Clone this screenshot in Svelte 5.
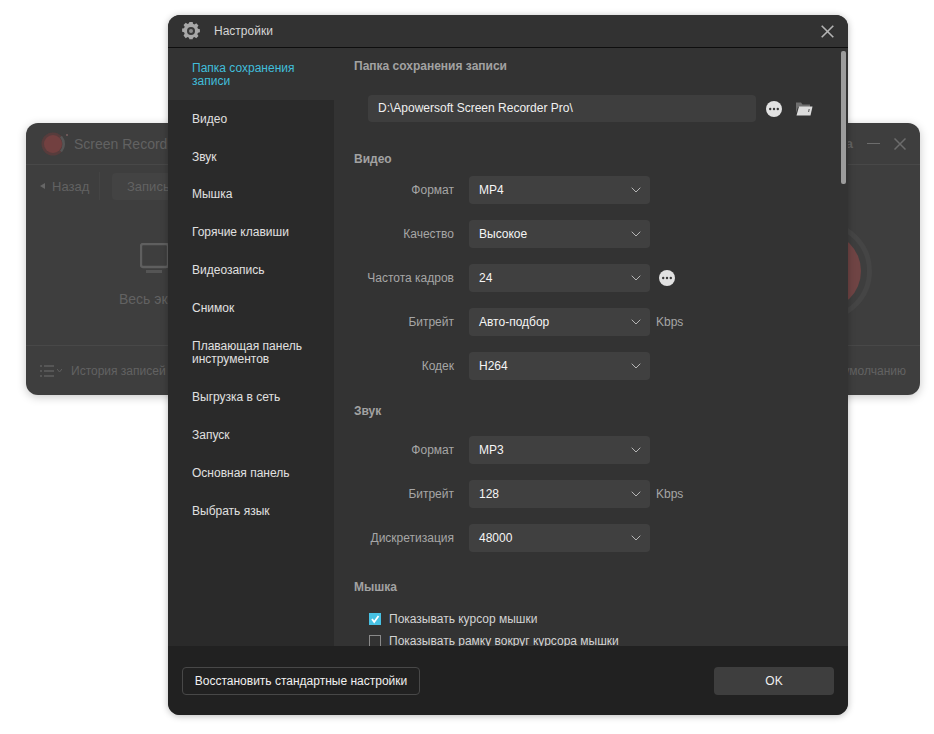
<script>
  const menu = [
    'Папка сохранения записи', 'Видео', 'Звук', 'Мышка', 'Горячие клавиши', 'Видеозапись',
    'Снимок', 'Плавающая панель инструментов', 'Выгрузка в сеть', 'Запуск', 'Основная панель', 'Выбрать язык'
  ];
  const video = [
    { label: 'Формат', value: 'MP4' },
    { label: 'Качество', value: 'Высокое' },
    { label: 'Частота кадров', value: '24', more: true },
    { label: 'Битрейт', value: 'Авто-подбор', unit: 'Kbps' },
    { label: 'Кодек', value: 'H264' }
  ];
  const audio = [
    { label: 'Формат', value: 'MP3' },
    { label: 'Битрейт', value: '128', unit: 'Kbps' },
    { label: 'Дискретизация', value: '48000' }
  ];
</script>

{#snippet dots()}
  <svg class="dots" width="18" height="18" viewBox="0 0 18 18">
    <circle cx="9" cy="9" r="8" fill="#e2e2e2" />
    <circle cx="5.2" cy="9" r="1.2" fill="#3a3a3a" />
    <circle cx="9" cy="9" r="1.2" fill="#3a3a3a" />
    <circle cx="12.8" cy="9" r="1.2" fill="#3a3a3a" />
  </svg>
{/snippet}

{#snippet row(r)}
  <div class="row">
    <span class="label">{r.label}</span>
    <div class="select">
      <span>{r.value}</span>
      <svg width="10" height="6" viewBox="0 0 10 6"><path d="M.7.7 5 5 9.3.7" fill="none" stroke="#b5b5b5" stroke-width="1" /></svg>
    </div>
    {#if r.more}{@render dots()}{/if}
    {#if r.unit}<span class="unit">{r.unit}</span>{/if}
  </div>
{/snippet}

<div class="stage">
  <section class="back">
    <header class="back-head">
      <div class="brand">
        <svg width="30" height="30" viewBox="0 0 30 30">
          <circle cx="13" cy="15" r="11.5" fill="#573c3c" />
          <circle cx="13" cy="15" r="9" fill="#724040" />
          <path d="M21 7.5a11.5 11.5 0 0 1 0 15" fill="none" stroke="#565656" stroke-width="2.5" />
          <circle cx="27" cy="6" r="1" fill="#7a6060" />
        </svg>
        <span>Screen Record</span>
      </div>
      <div class="win">
        <b>а</b>
        <i class="min"></i>
        <svg width="12" height="12" viewBox="0 0 12 12"><path d="M.5.5l11 11M11.5.5l-11 11" stroke="#6c6c6c" stroke-width="1.5" /></svg>
      </div>
    </header>
    <nav class="back-nav">
      <span class="tri"></span><span class="back-link">Назад</span>
      <i class="vline"></i>
      <span class="tab">Запись</span>
    </nav>
    <div class="back-body">
      <div class="screen">
        <svg width="28" height="34" viewBox="0 0 28 34">
          <rect x="1" y="1" width="27" height="23" rx="2" fill="none" stroke="#5f5f5f" stroke-width="2.4" />
          <rect x="6" y="27" width="16" height="3" fill="#555" />
        </svg>
        <span>Весь экран</span>
      </div>
      <div class="rec"><div class="rec-in"></div></div>
    </div>
    <footer class="back-foot">
      <div class="hist">
        <svg width="14" height="12" viewBox="0 0 14 12"><path d="M0 1h2M4 1h10M0 6h2M4 6h10M0 11h2M4 11h10" stroke="#5f5f5f" stroke-width="1.5" /></svg>
        <svg width="5" height="3" viewBox="0 0 5 3"><path d="M0 0l2.5 3L5 0" fill="none" stroke="#5f5f5f" /></svg>
        <span>История записей</span>
      </div>
      <span>По умолчанию</span>
    </footer>
  </section>

  <section class="dialog">
    <header class="head">
      <div class="title">
        <svg width="18" height="18" viewBox="0 0 18 18">
          <path fill="#a8a8a8" d="M7.2.3h3.6l.5 2.3 1.6.7 2-1.3 2.5 2.5-1.3 2 .7 1.6 2.2.5v3.6l-2.2.5-.7 1.6 1.3 2-2.5 2.5-2-1.3-1.6.7-.5 1.8H7.2l-.5-1.8-1.6-.7-2 1.3L.6 15.7l1.3-2-.7-1.6L-1 11.6V8l2.2-.5.7-1.6-1.3-2L3.1 1.4l2 1.3 1.6-.7z" transform="translate(1 -.5) scale(.89)" />
          <circle cx="9" cy="9" r="4" fill="#3a3a3a" />
          <circle cx="9" cy="9" r="2" fill="#8c8c8c" />
        </svg>
        <span>Настройки</span>
      </div>
      <svg width="13" height="13" viewBox="0 0 13 13"><path d="M.7.7l11.6 11.6M12.3.7.7 12.3" stroke="#b4b4b4" stroke-width="1.6" /></svg>
    </header>

    <div class="middle">
      <aside class="side">
        {#each menu as item, i}
          <div class="item" class:active={i === 0}>{item}</div>
        {/each}
      </aside>

      <main class="main">
        <h3 class="first">Папка сохранения записи</h3>
        <div class="path-row">
          <div class="path">D:\Apowersoft Screen Recorder Pro\</div>
          {@render dots()}
          <svg class="folder" width="18" height="15" viewBox="0 0 18 15">
            <path d="M1 1.5h5l1.5 2H15V6H3L1 12z" fill="#6f6f6f" />
            <path d="M4 5.5h13.5L15.5 14.5H1.5z" fill="#dcdcdc" />
            <path d="M14.2 8l-.6 3" stroke="#555" stroke-width="1" />
          </svg>
        </div>

        <h3 class="video">Видео</h3>
        <div class="rows">
          {#each video as r}{@render row(r)}{/each}
        </div>

        <h3 class="audio">Звук</h3>
        <div class="rows audio-rows">
          {#each audio as r}{@render row(r)}{/each}
        </div>

        <h3 class="mouse">Мышка</h3>
        <label class="check">
          <span class="box on">
            <svg width="12" height="12" viewBox="0 0 12 12"><path d="M3 6l2.2 3L9.5 3" fill="none" stroke="#fff" stroke-width="1.8" /></svg>
          </span>
          Показывать курсор мышки
        </label>
        <label class="check">
          <span class="box"></span>
          Показывать рамку вокруг курсора мышки
        </label>

        <div class="scroll"></div>
      </main>
    </div>

    <footer class="foot">
      <button class="restore">Восстановить стандартные настройки</button>
      <button class="ok">OK</button>
    </footer>
  </section>
</div>

<style>
  :global(body) { margin: 0; background: #fff; }
  .stage {
    position: relative;
    width: 934px;
    height: 734px;
    overflow: hidden;
    font-family: "Liberation Sans", Arial, sans-serif;
    font-size: 12px;
  }

  /* background window */
  .back {
    position: absolute;
    left: 26px;
    top: 123px;
    width: 894px;
    height: 272px;
    display: flex;
    flex-direction: column;
    background: #3e3e3e;
    border-radius: 12px;
    box-shadow: 0 2px 10px rgba(0, 0, 0, .22);
    color: #626262;
  }
  .back-head {
    height: 42px;
    flex: none;
    display: flex;
    align-items: center;
    justify-content: space-between;
    padding: 0 14px;
    border-bottom: 1px solid #484848;
    box-sizing: border-box;
  }
  .brand { display: flex; align-items: center; gap: 4px; font-size: 14px; }
  .win { display: flex; align-items: center; gap: 14px; }
  .win b { font-size: 13px; }
  .min { width: 13px; height: 1.5px; background: #6c6c6c; }
  .back-nav {
    height: 42px;
    display: flex;
    align-items: center;
    padding: 0 0 0 14px;
    flex: none;
  }
  .tri {
    width: 0; height: 0;
    border: 3.5px solid transparent;
    border-right: 5px solid #666;
    border-left: 0;
    margin-right: 7px;
  }
  .back-link { width: 47px; font-size: 13px; }
  .vline { width: 1px; height: 28px; background: #444; }
  .tab {
    margin-left: 12px;
    width: 100px;
    height: 27px;
    line-height: 27px;
    background: #434343;
    border-radius: 4px;
    padding-left: 15px;
    font-size: 13px;
  }
  .back-body { flex: 1; display: flex; position: relative; align-items: center; justify-content: space-between; min-height: 0; }
  .screen {
    margin-left: 93px;
    display: flex;
    flex-direction: column;
    align-items: flex-start;
    gap: 14px;
    font-size: 14px;
    margin-top: -2px;
  }
  .screen svg { margin-left: 21px; }
  .rec {
    width: 100px; height: 100px;
    margin-right: 48px;
    margin-top: -11px;
    flex: none;
    border: 5px solid #454545;
    border-radius: 50%;
    box-sizing: border-box;
    display: flex;
    align-items: center;
    justify-content: center;
  }
  .rec-in { width: 78px; height: 78px; border-radius: 50%; background: #6f4444; }
  .back-foot {
    height: 50px;
    flex: none;
    border-top: 1px solid #484848;
    display: flex;
    align-items: center;
    justify-content: space-between;
    padding: 0 14px;
    box-sizing: border-box;
  }
  .hist { display: flex; align-items: center; gap: 3px; }
  .hist span { margin-left: 6px; }

  /* dialog */
  .dialog {
    position: absolute;
    left: 168px;
    top: 15px;
    width: 680px;
    height: 700px;
    display: flex;
    flex-direction: column;
    background: #333;
    border-radius: 12px;
    overflow: hidden;
    box-shadow: 0 1px 7px rgba(0, 0, 0, .28);
    color: #ddd;
  }
  .head {
    height: 33px;
    flex: none;
    display: flex;
    align-items: center;
    justify-content: space-between;
    padding: 0 14px;
    border-bottom: 1px solid #0e0e0e;
    box-sizing: border-box;
    background: #323232;
  }
  .title { display: flex; align-items: center; gap: 14px; color: #d5d5d5; }
  .middle { flex: 1; display: flex; min-height: 0; }
  .side { width: 166px; flex: none; background: #2a2a2a; }
  .item { padding: 12px 24px; line-height: 13.8px; color: #e0e0e0; }
  .item.active { background: #333; color: #41bedb; line-height: 13px; padding-top: 14px; padding-bottom: 12px; margin-bottom: .8px; }
  .main { position: relative; flex: 1; padding-left: 20px; overflow: hidden; min-width: 0; }
  h3 { margin: 0; font-size: 12px; line-height: 14px; font-weight: 700; color: #a2a2a2; }
  h3.first { margin-top: 11px; }
  h3.video { margin-top: 30px; }
  h3.audio { margin-top: 24px; }
  h3.mouse { margin-top: 28px; }
  .path-row { display: flex; align-items: center; margin-top: 22px; margin-left: 14px; }
  .path {
    width: 388px;
    height: 27px;
    line-height: 27px;
    background: #3e3e3e;
    border-radius: 4px;
    padding-left: 10px;
    box-sizing: border-box;
    color: #f0f0f0;
  }
  .path-row .dots { margin-left: 9px; }
  .folder { margin-left: 12px; }
  .rows { display: flex; flex-direction: column; gap: 16px; margin-top: 10px; }
  .audio-rows { margin-top: 18px; }
  .row { display: flex; align-items: center; height: 28px; }
  .label { width: 100px; text-align: right; color: #a6a6a6; margin-right: 15px; white-space: nowrap; }
  .select {
    width: 181px;
    height: 28px;
    background: #404040;
    border-radius: 4px;
    display: flex;
    align-items: center;
    justify-content: space-between;
    padding: 0 9px 0 10px;
    box-sizing: border-box;
    color: #f5f5f5;
  }
  .row .dots { margin-left: 8px; }
  .unit { margin-left: 6px; color: #a6a6a6; }
  .check { display: flex; align-items: center; gap: 8px; height: 22px; margin-left: 15px; color: #d4d4d4; }
  .check:first-of-type { margin-top: 14px; }
  .box {
    width: 12px; height: 12px;
    box-sizing: border-box;
    border: 1px solid #8a8a8a;
    display: block;
    flex: none;
  }
  .box.on { background: #47c1e3; border: 0; }
  .box svg { display: block; }
  .scroll {
    position: absolute;
    top: 3px;
    right: 2px;
    width: 5px;
    height: 133px;
    background: #9c9c9c;
    border-radius: 2px;
  }
  .foot {
    height: 69px;
    flex: none;
    background: #212121;
    display: flex;
    align-items: center;
    justify-content: space-between;
    padding: 0 14px;
    box-sizing: border-box;
  }
  button {
    height: 28px;
    font: inherit;
    border-radius: 4px;
    color: #f0f0f0;
    padding: 0;
  }
  .restore { width: 238px; background: transparent; border: 1px solid #484848; }
  .ok { width: 120px; background: #3e3e3e; border: 0; }
</style>
